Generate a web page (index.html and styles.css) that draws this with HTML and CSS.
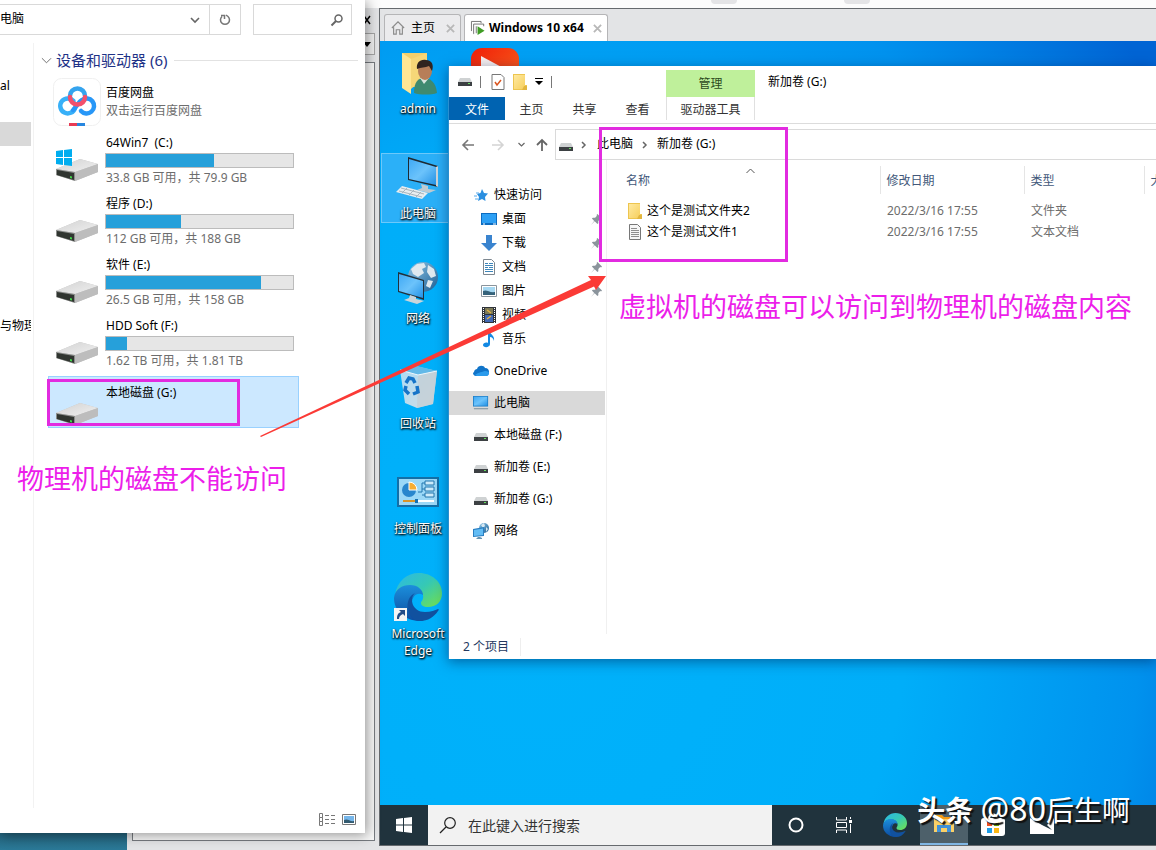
FILE: index.html
```html
<!DOCTYPE html>
<html lang="zh-CN">
<head>
<meta charset="utf-8">
<meta name="viewport" content="width=device-width, initial-scale=1">
<title>Windows 10 x64</title>
<link rel="stylesheet" href="styles.css">
</head>
<body>
<svg class="defs" aria-hidden="true">
  <defs>
    <linearGradient id="gTop" x1="0" y1="0" x2="1" y2="1"><stop offset="0" stop-color="#d2d2d2"/><stop offset="1" stop-color="#f0f0f0"/></linearGradient>
    <linearGradient id="gScreen" x1="0" y1="0" x2="1" y2="1"><stop offset="0" stop-color="#3fa9f5"/><stop offset=".5" stop-color="#6cc3fb"/><stop offset="1" stop-color="#2492e6"/></linearGradient>
    <linearGradient id="gFolder" x1="0" y1="0" x2="1" y2="1"><stop offset="0" stop-color="#ffe9a0"/><stop offset="1" stop-color="#f6cf5d"/></linearGradient>
    <linearGradient id="gEdgeA" x1="0" y1="0" x2="1" y2="1"><stop offset="0" stop-color="#2bb8e8"/><stop offset=".5" stop-color="#36c9b4"/><stop offset="1" stop-color="#74e24a"/></linearGradient>
    <linearGradient id="gEdgeB" x1="0" y1="0" x2="0" y2="1"><stop offset="0" stop-color="#1c8fdc"/><stop offset="1" stop-color="#0c4ca0"/></linearGradient>
    <linearGradient id="gBin" x1="0" y1="0" x2="1" y2="1"><stop offset="0" stop-color="#a9dcf7"/><stop offset="1" stop-color="#d4dce2"/></linearGradient>
    <linearGradient id="gRed" x1="0" y1="0" x2="1" y2="1"><stop offset="0" stop-color="#f01f08"/><stop offset="1" stop-color="#fb6a22"/></linearGradient>
    <linearGradient id="gGlobe" x1="0" y1="0" x2="1" y2="1"><stop offset="0" stop-color="#8fc6e8"/><stop offset="1" stop-color="#1c5f94"/></linearGradient>
  </defs>
  <symbol id="drive" viewBox="0 0 42 22">
    <path d="M0 10 24 0 42 5 42 13 19 22 0 16z" fill="#c3c3c3"/>
    <path d="M0 10 24 0 42 5 19 13z" fill="url(#gTop)"/>
    <path d="M19 13 42 5v8l-23 9z" fill="#bdbdbd"/>
    <path d="M0 10l19 3v9L0 16z" fill="#8b8d8b"/>
    <path d="M1 11l17 3v7L1 16z" fill="#303530"/>
    <path d="M14 17l2 .5v2l-2-.5z" fill="#44d64c"/>
  </symbol>
  <symbol id="drive-sm" viewBox="0 0 14 8">
    <path d="M2 0h10l2 4H0z" fill="#cfd2d3"/><path d="M0 4h14v4H0z" fill="#3c4043"/><path d="M10 5h2v1h-2z" fill="#63df5f"/>
  </symbol>
  <symbol id="chev-down" viewBox="0 0 12 12"><path d="M2 4l4 4 4-4" fill="none" stroke="currentColor" stroke-width="1.6"/></symbol>
  <symbol id="chev-right" viewBox="0 0 12 12"><path d="M4 3l3 3-3 3" fill="none" stroke="currentColor" stroke-width="1.500"/></symbol>
  <symbol id="pin" viewBox="0 0 12 12"><path d="M7 0l5 5-1 1-1-.5-2 2V10L7 11 4 8 0 12 3.500 7.500 1 5l1-1h2.500l2-2L6 1z" fill="#8b949c"/></symbol>
  <symbol id="folder" viewBox="0 0 14 16"><path d="M0 0h12v11h2v5H0z" fill="#edc54f"/><path d="M1 1h11v14H1z" fill="url(#gFolder)"/><path d="M11 12h3v4h-5z" fill="#e2b53e"/></symbol>
  <symbol id="edge" viewBox="0 0 48 48">
    <path d="M1 22C3 8 13 0 25 0c13 0 23 9 23 20 0 9-6 14-14 14-5 0-7-2-7-4s3-3 2-8c-1-5-6-9-13-9C9 13 4 17 1 22z" fill="url(#gEdgeA)"/>
    <path d="M0 25C1 16 8 12 16 12c8 0 13 5 13 10-6-4-12 2-11 10 1 7 5 13 12 16C12 49 0 39 0 25z" fill="url(#gEdgeB)"/>
    <path d="M21 20c-6 5-3 19 10 19 6 0 10-2 13-3 1 0 1 1 0 2-4 6-10 10-18 10C12 48 9 25 21 20z" fill="#11519f"/>
  </symbol>
  <symbol id="monitor-sm" viewBox="0 0 18 16"><path d="M0 0h17v12H0z" fill="#2381c8"/><path d="M1 1h15v10H1z" fill="url(#gScreen)"/><path d="M1 14h16v1H1z" fill="#6d8494"/></symbol>
</svg>

<div class="host-desktop">
  <section class="vmware" aria-label="VMware">
    <div class="toolbar-strip"><i></i><i></i></div>
    <div class="library">
      <button class="library-close" aria-label="关闭库"><svg viewBox="0 0 8 8"><path d="M1 0l6 8M7 0L1 8" stroke="#000" stroke-width="1.500"/></svg></button>
      <button class="library-combo" aria-label="搜索选项"><svg viewBox="0 0 8 5"><path d="M0 0h8L4 5z"/></svg></button>
      <div class="library-tree"></div>
    </div>
    <div class="vm-pane">
      <div class="vm-tabs">
        <button class="vm-tab"><svg class="i16" viewBox="0 0 16 16"><path d="M1 8l7-7 7 7M3 7v8h3v-5h4v5h3V7" fill="none" stroke="#8b8b8b" stroke-width="1.300"/></svg><span>主页</span><svg class="x" viewBox="0 0 10 10"><path d="M1 1l8 8M9 1L1 9" stroke="#b8b8b8" stroke-width="2"/></svg></button>
        <button class="vm-tab active"><svg class="i16" viewBox="0 0 16 16"><path d="M.5 11.500V.5h11v2M3.500 14.500H3v-11h11.500V6M6 14V6" fill="none" stroke="#666"/><path d="M7.500 6l8 5-8 5z" fill="#3f9c24"/></svg><span>Windows 10 x64</span><svg class="x" viewBox="0 0 10 10"><path d="M1 1l8 8M9 1L1 9" stroke="#b8b8b8" stroke-width="2"/></svg></button>
      </div>

      <div class="guest-screen">
        <div class="desktop-icons">
          <div class="icon-col">
            <a class="desk-icon" href="#admin"><svg viewBox="0 0 48 52"><path d="M8 5h25v34H14z" fill="#f3cf6c"/><path d="M8 5l9 6v35l-9-6z" fill="#ffe694"/><path d="M17 11l16-6v22l-16 14z" fill="#f6d778"/><path d="M20 45c0-11 4-15 10-15s12 4 13 15c-6 2-17 2-23 0z" fill="#3f8a70"/><path d="M26 30l4 6 5-6z" fill="#d9e5df"/><ellipse cx="31" cy="23" rx="7" ry="9" fill="#b77e58"/><path d="M23 21c-1-6 3-10 9-9 6 0 8 5 6 11l-3-5c-4 2-8 1-12 3z" fill="#30241f"/></svg><span>admin</span></a>
            <a class="desk-icon selected" href="#pc"><svg viewBox="0 0 48 52"><path d="M14 4l30 9v21l-30-7z" fill="#1e2a33"/><path d="M15 6l27 8v18l-27-6z" fill="url(#gScreen)"/><path d="M42 14l2-1v21l-2-1z" fill="#cfd6da"/><path d="M27 31l7 2v3l8 1-7 3-12-3 5-2z" fill="#bfcbd2"/><path d="M8 33l26 7-6 6-26-7z" fill="#e7edf0"/><path d="M7 35l23 6M5 38l23 6M13 35l-5 5M20 37l-5 5M27 39l-5 5" stroke="#a8b6be"/></svg><span>此电脑</span></a>
            <a class="desk-icon" href="#net"><svg viewBox="0 0 48 52"><circle cx="29" cy="19" r="15" fill="url(#gGlobe)"/><path d="M17 11l6-5 7-1 2 4-4 2 2 4-6 4-5-3zM34 7l6 4 2 7-5 2-4-6zM34 22l5 1-3 7-4-2z" fill="#dfe9ef"/><path d="M4 14l26 8v20L4 34z" fill="#22303a"/><path d="M5 16l24 7v17L5 33z" fill="url(#gScreen)"/><path d="M16 37l6 2v2l8 2-7 3-13-4 5-2z" fill="#cbd5da"/></svg><span>网络</span></a>
            <a class="desk-icon" href="#bin"><svg viewBox="0 0 48 52"><path d="M6 7l15-4 22 5-4 33-16 4-12-5z" fill="url(#gBin)"/><path d="M6 7l18 5 19-4-20-5z" fill="#62b9e8"/><path d="M24 12l19-4-4 33-16 4z" fill="#c4cfd6" opacity=".8"/><path d="M6 7l18 5 19-4" fill="none" stroke="#edf7fc"/><path d="M12 20l3-5 4 1 2 4M23 23l1 6-5 2M15 31l-4-4 1-4" fill="none" stroke="#1674c8" stroke-width="3.500"/></svg><span>回收站</span></a>
            <a class="desk-icon" href="#panel"><svg viewBox="0 0 48 52"><path d="M3 9h42v30H3z" fill="#146fa6"/><path d="M5 11h38v26H5z" fill="#9bd8f7"/><circle cx="15" cy="22" r="7" fill="#2886cd"/><path d="M15 22v-8a8 8 0 0 1 8 8z" fill="#f7ae33" stroke="#fff"/><path d="M24 24h4V15h3M28 21h3M28 27h3" fill="none" stroke="#2277ae"/><path d="M31 13h9v4h-9zM31 19h9v4h-9zM31 25h9v4h-9z" fill="#cdebfa" stroke="#2277ae"/><path d="M9 33h12" stroke="#d9952a" stroke-width="2"/><path d="M22 33h18" stroke="#fff" stroke-width="2"/><path d="M21 31h3v4h-3z" fill="#1671b2"/></svg><span>控制面板</span></a>
            <a class="desk-icon" href="#edge"><svg viewBox="0 0 48 52"><use href="#edge" width="48" height="48"/><path d="M0 35h13v13H0z" fill="#f4f4f4"/><path d="M5 37h6v6l-2-2c-3 1-4 3-4 5H3c0-4 1-6 4-7z" fill="#234c87"/></svg><span>Microsoft<br>Edge</span></a>
          </div>
          <div class="icon-col">
            <a class="desk-icon" href="#video" aria-label="视频"><svg viewBox="0 0 48 52"><rect width="48" height="48" rx="11" fill="url(#gRed)"/><path d="M10 8l26 14-26 14z" fill="#f6efef"/></svg></a>
          </div>
        </div>

        <section class="guest-explorer" aria-label="新加卷 (G:)">
          <header class="ribbon">
            <div class="ribbon-main">
              <div class="quick-bar">
                <svg class="q-drive" viewBox="0 0 14 8"><use href="#drive-sm"/></svg><i></i>
                <button class="q-props" aria-label="属性"><svg viewBox="0 0 14 16"><path d="M1 .5h9l3 3v12H1z" fill="#fff" stroke="#777"/><path d="M4 8l2 3 4-5" fill="none" stroke="#d9541e" stroke-width="1.500"/></svg></button>
                <button aria-label="新建文件夹"><svg viewBox="0 0 14 16"><use href="#folder"/></svg></button>
                <button class="q-more" aria-label="自定义快速访问工具栏"><svg viewBox="0 0 8 7"><path d="M0 0h8v1H0zM0 3h8L4 7z"/></svg></button><i></i>
              </div>
              <nav class="ribbon-tabs"><button class="file">文件</button><button>主页</button><button>共享</button><button>查看</button></nav>
            </div>
            <div class="ribbon-tool"><div>管理</div><button>驱动器工具</button></div>
            <h1>新加卷 (G:)</h1>
          </header>
          <div class="address-row">
            <button aria-label="后退"><svg viewBox="0 0 14 14"><path d="M13 7H2M7 2L2 7l5 5" fill="none" stroke="#777" stroke-width="1.600"/></svg></button>
            <button aria-label="前进"><svg viewBox="0 0 14 14"><path d="M1 7h11M7 2l5 5-5 5" fill="none" stroke="#d4d4d4" stroke-width="1.600"/></svg></button>
            <button class="recent" aria-label="最近位置"><svg viewBox="0 0 12 12"><use href="#chev-down"/></svg></button>
            <button class="up" aria-label="上移"><svg viewBox="0 0 14 14"><path d="M7 13V2M2 7l5-5 5 5" fill="none" stroke="#666" stroke-width="1.800"/></svg></button>
            <div class="address"><svg class="a-drive" viewBox="0 0 14 8"><use href="#drive-sm"/></svg><svg class="a-chev" viewBox="0 0 12 12"><use href="#chev-right"/></svg><a href="#pc">此电脑</a><svg class="a-chev" viewBox="0 0 12 12"><use href="#chev-right"/></svg><a href="#g">新加卷 (G:)</a></div>
          </div>
          <div class="explorer-body">
            <nav class="tree">
              <a class="first" href="#q"><svg viewBox="0 0 16 16"><path d="M9 2l2 4 4 .5-3 3.500.5 4-3.500-2-4 2 1-4-2-3 3.500-1z" fill="#2b8fe0"/><path d="M1 9h3M2 12h3M3 6h3" stroke="#58aaea"/></svg>快速访问</a>
              <a class="child" href="#desk"><svg viewBox="0 0 16 16"><path d="M0 2h16v12H0z" fill="#0d6cc0"/><path d="M1 3h14v9H1z" fill="#2da0f5"/><path d="M2 13h2M12 13h3" stroke="#fff"/></svg>桌面<svg class="pin" viewBox="0 0 12 12"><use href="#pin"/></svg></a>
              <a class="child" href="#down"><svg viewBox="0 0 16 16"><path d="M5 0h6v8h5l-8 8-8-8h5z" fill="#3a84cf"/></svg>下载<svg class="pin" viewBox="0 0 12 12"><use href="#pin"/></svg></a>
              <a class="child" href="#docs"><svg viewBox="0 0 16 16"><path d="M2.500.5h8l3 3v12h-11z" fill="#fff" stroke="#7d8790"/><path d="M4 4.500h3M8 4.500h4M4 6.500h8M4 8.500h3M8 8.500h4M4 10.500h8M4 12.500h8" stroke="#3e86ba"/></svg>文档<svg class="pin" viewBox="0 0 12 12"><use href="#pin"/></svg></a>
              <a class="child" href="#pics"><svg viewBox="0 0 16 16"><path d="M.5 2.500h15v11H.5z" fill="#fff" stroke="#8a949c"/><path d="M2 4h12v8H2z" fill="#a6d8f2"/><path d="M2 8c4-2 6 2 12 1v3H2z" fill="#36637b"/></svg>图片<svg class="pin" viewBox="0 0 12 12"><use href="#pin"/></svg></a>
              <a class="child" href="#videos"><svg viewBox="0 0 16 16"><path d="M1 0h14v16H1z" fill="#30343a"/><path d="M4 1h8v6H4z" fill="#7d7a57"/><path d="M4 8h8v7H4z" fill="#4369b4"/><path d="M6 3l4 3M6 12l4-3" stroke="#e4b23f" stroke-width="1.500"/><path d="M2.500 1v15M13.500 1v15" stroke="#fff" stroke-dasharray="1 1"/></svg>视频</a>
              <a class="child" href="#music"><svg viewBox="0 0 16 16"><path d="M7 0h2c0 4 5 4 4 10-1-3-2-4-4-4v7c0 4-7 4-7 1 0-2 3-3 5-2z" fill="#1389e3"/></svg>音乐</a>
              <a class="root" href="#od"><svg viewBox="0 0 16 16"><path d="M1 9c0-2 2-3 3-3 1-4 7-4 8-1 3 0 4 2 4 4s-1 4-3 4H3c-2 0-3-2-3-3z" fill="#1074c9"/><path d="M2 12c4-3 7-3 10-4 3 0 4 1 4 2 0 2-1 3-3 3H4z" fill="#2a9bec"/></svg>OneDrive</a>
              <a class="root current" href="#pc"><svg viewBox="0 0 18 16"><use href="#monitor-sm"/></svg>此电脑</a>
              <a class="root" href="#f"><svg viewBox="-1 -6 16 16"><use href="#drive-sm" width="14" height="8"/></svg>本地磁盘 (F:)</a>
              <a class="root" href="#e"><svg viewBox="-1 -6 16 16"><use href="#drive-sm" width="14" height="8"/></svg>新加卷 (E:)</a>
              <a class="root" href="#g"><svg viewBox="-1 -6 16 16"><use href="#drive-sm" width="14" height="8"/></svg>新加卷 (G:)</a>
              <a class="root" href="#net"><svg viewBox="0 0 16 16"><circle cx="11" cy="5" r="5" fill="url(#gGlobe)"/><path d="M8 2l3-2 1 3-2 2zM13 4l2 2-2 3z" fill="#d7e8f2"/><path d="M0 6l11-2v9L0 14z" fill="#2a7fc2"/><path d="M1 7l9-1.500V12l-9 1z" fill="#63bdf5"/><path d="M3 16h6v-1l-2-1H5z" fill="#6593b2"/></svg>网络</a>
            </nav>
            <div class="files">
              <table>
                <colgroup><col class="c-name"><col class="c-date"><col class="c-type"><col></colgroup>
                <thead><tr><th scope="col"><div class="name-head">名称<svg viewBox="0 0 9 6"><path d="M.5 5l4-4 4 4" fill="none" stroke="#555"/></svg></div></th><th scope="col">修改日期</th><th scope="col">类型</th><th scope="col">大小</th></tr></thead>
                <tbody>
                  <tr><td><a href="#d2"><svg viewBox="0 0 14 16"><use href="#folder"/></svg>这个是测试文件夹2</a></td><td>2022/3/16 17:55</td><td>文件夹</td><td></td></tr>
                  <tr><td><a href="#t1"><svg viewBox="0 0 14 16"><path d="M1.500.5h8l3 3v12h-11z" fill="#f6f6f6" stroke="#777"/><path d="M3 4.500h6M3 6.500h8M3 8.500h8M3 10.500h8M3 12.500h8" stroke="#8e8e8e"/></svg>这个是测试文件1</a></td><td>2022/3/16 17:55</td><td>文本文档</td><td></td></tr>
                </tbody>
              </table>
            </div>
          </div>
          <footer class="guest-status"><span>2 个项目</span></footer>
        </section>
      </div>

      <div class="taskbar">
        <button class="start" aria-label="开始"><svg viewBox="0 0 16 16"><path d="M0 2l7-1v6.500H0zM8 1l8-1v7.500H8zM0 8.500h7V15l-7-1zM8 8.500h8V16l-8-1z" fill="#fff"/></svg></button>
        <label class="task-search"><svg viewBox="0 0 16 16"><circle cx="10" cy="6" r="5.300" fill="none" stroke="#222" stroke-width="1.200"/><path d="M6 10l-6 6" stroke="#222" stroke-width="1.300"/></svg><input type="text" placeholder="在此键入进行搜索" aria-label="在此键入进行搜索"></label>
        <button aria-label="Cortana"><svg class="s16" viewBox="0 0 16 16"><circle cx="8" cy="8" r="6.500" fill="none" stroke="#fff" stroke-width="2"/></svg></button>
        <button aria-label="任务视图"><svg class="s16" viewBox="0 0 16 16"><path d="M.5 0v3h10V0M.5 16v-3h10v3M.5 5.500h10v5H.5zM14.500 0v2M14.500 7v9" fill="none" stroke="#fff"/><path d="M13 3h3v3h-3z" fill="#fff"/></svg></button>
        <nav class="apps">
          <button aria-label="Microsoft Edge"><svg class="s24" viewBox="0 0 48 48"><use href="#edge"/></svg></button>
          <button class="running" aria-label="文件资源管理器"><svg class="s24" viewBox="0 0 24 24"><path d="M2 3h8l2 2h10v4H2z" fill="#f39a14"/><path d="M2 7h20v13H2z" fill="#fad067"/><path d="M5 20v-7h14v7h-4v-4H9v4z" fill="#3f91d9"/></svg></button>
          <button aria-label="Microsoft Store"><svg class="s24" viewBox="0 0 24 24"><path d="M8 6c0-6 8-6 8 0" fill="none" stroke="#fff" stroke-width="2"/><rect y="5" width="24" height="18" rx="3" fill="#fff"/><path d="M6 8h5v5H6z" fill="#ef5022"/><path d="M13 8h5v5h-5z" fill="#7fba00"/><path d="M6 15h5v5H6z" fill="#1d9ee8"/><path d="M13 15h5v5h-5z" fill="#fdb813"/></svg></button>
          <button aria-label="邮件"><svg class="s24" viewBox="0 0 24 24"><path d="M0 5h24v16H0z" fill="#fff"/><path d="M0 5h24l-7 7 5 5-10-5z" fill="#20333d"/></svg></button>
        </nav>
      </div>
    </div>
  </section>

  <section class="host-explorer" aria-label="此电脑">
    <div class="host-top">
      <div class="host-address"><span>电脑</span><button aria-label="历史"><svg viewBox="0 0 12 12"><use href="#chev-down"/></svg></button><button class="refresh" aria-label="刷新"><svg viewBox="0 0 12 12"><path d="M3 2.500A4.500 4.500 0 1 0 9 2.500L7 1M2 1.500h3.500V5" fill="none" stroke="#777" stroke-width="1.500"/></svg></button></div>
      <label class="host-search"><input type="text" aria-label="搜索"><svg viewBox="0 0 12 12"><circle cx="7.500" cy="4.500" r="3.500" fill="none" stroke="#666" stroke-width="1.500"/><path d="M5 7l-4.500 4.500" stroke="#666" stroke-width="2"/></svg></label>
    </div>
    <div class="host-body">
      <nav class="host-nav"><a href="#al">al</a><a class="current" href="#cur" aria-label="此电脑"></a><a class="far" href="#wl">与物理</a></nav>
      <div class="host-main">
        <h2><svg viewBox="0 0 12 12"><path d="M1 3.500l5 5 5-5" fill="none" stroke="#666"/></svg>设备和驱动器 (6)</h2>
        <div class="drives">
          <a class="drive baidu" href="#baidu"><svg class="d-icon" viewBox="0 0 48 48"><rect x=".5" y=".5" width="47" height="47" rx="8" fill="#fff" stroke="#f0f0f0"/><g fill="none" stroke-width="4.500" stroke-linecap="round"><path d="M22 30a7.500 7.500 0 1 1-1.500-7" stroke="#38b0f8"/><path d="M20 32c3-2 5-8 9-10a7.500 7.500 0 1 1-1 11" stroke="#2897f7"/><path d="M17 18a7.500 7.500 0 0 1 15 0" stroke="#35a4ee"/><path d="M17 19a7.500 7.500 0 0 0 15 0" stroke="#f3506c"/></g><path d="M16 45h8v3h-8z" fill="#e83b54"/><path d="M24 45h8v3h-8z" fill="#2786df"/></svg><div class="d-info"><strong>百度网盘</strong><small>双击运行百度网盘</small></div></a>
          <a class="drive" href="#c"><svg class="d-icon" viewBox="0 0 48 48"><use href="#drive" x="3" y="25" width="42" height="22"/><path d="M3 17l7-1v7H3zM11 16l8-1v8h-8zM3 24h7v7l-7-1zM11 24h8v8l-8-1z" fill="#00adef"/></svg><div class="d-info"><strong>64Win7 &nbsp;(C:)</strong><div class="bar"><i style="width:58%"></i></div><small>33.8 GB 可用，共 79.9 GB</small></div></a>
          <a class="drive" href="#d"><svg class="d-icon" viewBox="0 0 48 48"><use href="#drive" x="3" y="25" width="42" height="22"/></svg><div class="d-info"><strong>程序 (D:)</strong><div class="bar"><i style="width:40%"></i></div><small>112 GB 可用，共 188 GB</small></div></a>
          <a class="drive" href="#e"><svg class="d-icon" viewBox="0 0 48 48"><use href="#drive" x="3" y="25" width="42" height="22"/></svg><div class="d-info"><strong>软件 (E:)</strong><div class="bar"><i style="width:83%"></i></div><small>26.5 GB 可用，共 158 GB</small></div></a>
          <a class="drive" href="#f"><svg class="d-icon" viewBox="0 0 48 48"><use href="#drive" x="3" y="25" width="42" height="22"/></svg><div class="d-info"><strong>HDD Soft (F:)</strong><div class="bar"><i style="width:11%"></i></div><small>1.62 TB 可用，共 1.81 TB</small></div></a>
          <a class="drive selected" href="#g"><svg class="d-icon" viewBox="0 0 48 48"><use href="#drive" x="3" y="25" width="42" height="22"/></svg><div class="d-info"><strong>本地磁盘 (G:)</strong></div></a>
        </div>
      </div>
    </div>
    <footer class="host-status">
      <button aria-label="详细信息"><svg viewBox="0 0 17 14"><path d="M1.500.5h3v4h-3zM1.500 4.500h3v4h-3zM1.500 8.500h3v4h-3zM7 2.500h4M13 2.500h4M7 6.500h4M13 6.500h4M7 10.500h4M13 10.500h4" fill="none" stroke="#777"/></svg></button>
      <button aria-label="大图标"><svg viewBox="0 0 17 14"><path d="M1.500 1.500h13v10h-13z" fill="#fff" stroke="#777"/><path d="M3 3h10v7H3z" fill="#75b6ea"/><path d="M3 7c4-2 6 2 10 1v2H3z" fill="#335b70"/></svg></button>
    </footer>
  </section>

  <div class="notes">
    <svg class="arrow" viewBox="0 0 346 161" aria-hidden="true"><path d="M0 160L331 4 328 0 346 0 336 14 334 10.500 120 107 1 161z" fill="#fb3a36"/></svg>
    <div class="mark mark-disk"></div>
    <div class="mark mark-files"></div>
    <p class="note note-host">物理机的磁盘不能访问</p>
    <p class="note note-guest">虚拟机的磁盘可以访问到物理机的磁盘内容</p>
    <p class="watermark"><b>头条</b> <span>@80</span>后生啊</p>
  </div>
</div>
</body>
</html>
```
FILE: styles.css
```css
* { box-sizing: border-box; }
body {
  margin: 0;
  font: 12px/18px "Noto Sans", "Noto Sans CJK SC", sans-serif;
  color: #000;
}
button, input { font: inherit; color: inherit; background: none; border: 0; padding: 0; margin: 0; }
a { color: inherit; text-decoration: none; }
svg { display: block; flex: none; overflow: visible; }
h1, h2, p { margin: 0; font-weight: 400; }
.defs { position: absolute; width: 0; height: 0; }

.host-desktop {
  position: relative;
  min-height: 100vh;
  overflow: hidden;
  background: linear-gradient(#225d75, #2b7a98) bottom / 100% 20px no-repeat #2b7a98;
}

/* VMware main window */
.vmware {
  position: absolute;
  inset: 0 0 0 127px;
  display: grid;
  grid-template: 8px 1fr / 252px 1fr;
  background: #e3e4e6;
}
.toolbar-strip {
  grid-column: 1 / -1;
  display: flex;
  gap: 107px;
  padding-left: 584px;
  background: #fcfcfc;
}
.toolbar-strip i { width: 26px; height: 4px; border-radius: 0 0 4px 4px; background: #e4e4e6; }
.library { display: flex; flex-direction: column; padding: 4px 4px 9px 5px; }
.library-close { align-self: flex-end; width: 8px; height: 16px; margin-right: 4px; }
.library-close svg { width: 8px; height: 8px; }
.library-combo {
  display: flex;
  justify-content: flex-end;
  align-items: center;
  height: 22px;
  margin: 5px 0 7px;
  padding-right: 3px;
  border: 1px solid #a5a5a5;
  background: #eee;
}
.library-combo svg { width: 8px; height: 5px; }
.library-tree { flex: 1; border: 1px solid #777b80; background: #f8f8f8; }
.vm-pane {
  display: flex;
  flex-direction: column;
  min-width: 0;
  margin-bottom: 4px;
  border: solid #666a6e;
  border-width: 1px 0 1px 1px;
}
.vm-tabs { display: flex; gap: 3px; height: 32px; padding: 5px 4px 0; }
.vm-tab {
  display: flex;
  align-items: center;
  gap: 6px;
  padding: 0 5px 0 6px;
  border: 1px solid #b5b5b7;
  border-bottom: 0;
  border-radius: 3px 3px 0 0;
  background: #ebebed;
  white-space: nowrap;
}
.vm-tab.active { gap: 4px; background: #fff; font-weight: 700; }
.vm-tab .i16 { width: 14px; height: 14px; }
.vm-tab .x { width: 9px; height: 9px; margin-left: 5px; }

/* Guest desktop */
.guest-screen {
  position: relative;
  flex: 1;
  background: radial-gradient(ellipse 100% 115% at 20% 75%, #00b2fb 0, #00aef9 48%, #0092ee 78%, #0064d4 100%);
}
.desktop-icons { display: flex; gap: 3px; padding: 7px 1px; }
.icon-col { display: flex; flex-direction: column; gap: 35px; }
.desk-icon {
  display: flex;
  flex-direction: column;
  align-items: center;
  width: 74px;
  height: 70px;
  color: #fff;
  line-height: 17px;
  text-align: center;
  text-shadow: 1px 1px 2px #000, 0 1px 2px #000;
}
.desk-icon svg { width: 48px; height: 52px; }
.desk-icon.selected { background: #2bb0f8; outline: 1px solid #6cc9fa; outline-offset: -1px; }

/* Guest explorer window */
.guest-explorer {
  position: absolute;
  inset: 25px 0 146px 68px;
  display: flex;
  flex-direction: column;
  background: #fff;
  border-left: 1px solid #2a8fd0;
  box-shadow: 0 3px 12px rgba(0, 30, 80, .5);
}
.ribbon { display: flex; height: 58px; border-bottom: 1px solid #dcdcdc; }
.ribbon-main { width: 217px; }
.quick-bar { display: flex; align-items: center; gap: 8px; height: 31px; padding-left: 9px; }
.quick-bar i { width: 1px; height: 12px; background: #777; }
.quick-bar button svg { width: 14px; height: 16px; }
.quick-bar .q-drive { width: 14px; height: 8px; }
.quick-bar .q-props { margin-left: 2px; }
.quick-bar .q-more svg { width: 8px; height: 7px; }
.ribbon-tabs { display: flex; height: 23px; color: #333; }
.ribbon-tabs button { width: 53px; padding-top: 2px; }
.ribbon-tabs .file { width: 56px; background: #0063b1; color: #fff; }
.ribbon-tool { width: 89px; padding-top: 4px; text-align: center; color: #333; }
.ribbon-tool div { height: 27px; line-height: 27px; background: #bff09b; color: #2d4a20; }
.ribbon-tool button { width: 100%; height: 23px; padding-top: 2px; border: solid #e0e0e0; border-width: 0 1px; }
.ribbon h1 { padding: 7px 13px; font-size: 12px; line-height: 18px; }
.address-row { display: flex; align-items: center; height: 36px; padding-top: 5px; color: #666; }
.address-row button { width: 14px; margin-left: 12px; }
.address-row button + button { margin-left: 16px; }
.address-row .recent { width: 9px; }
.address-row .up { width: 14px; }
.address-row button.recent { margin-left: 12px; }
.address-row button.up { margin-left: 9px; }
.address {
  display: flex;
  align-items: center;
  flex: 1;
  height: 31px;
  margin-left: 6px;
  border: 1px solid #dadada;
  border-right: 0;
}
.address a { padding-bottom: 2px; color: #000; }
.a-drive { width: 14px; height: 8px; margin: 4px 5px 0 3px; }
.a-chev { width: 12px; height: 12px; margin-right: 7px; }
.address a + .a-chev { margin-left: 6px; margin-right: 6px; }
.explorer-body { display: flex; flex: 1; min-height: 0; }
.tree { flex: none; width: 158px; padding: 23px 1px 0 0; border-right: 1px solid #f0f0f0; }
.tree a { display: flex; align-items: center; gap: 5px; height: 24px; padding-left: 24px; }
.tree a > svg { width: 16px; height: 16px; }
.tree .child { padding-left: 32px; }
.tree .root { margin-top: 8px; }
.tree .current { background: #d9d9d9; }
.tree a > .pin { width: 11px; height: 11px; margin-left: auto; margin-right: 3px; }
.files { flex: 1; min-width: 0; padding-top: 6px; overflow: hidden; }
table { width: 640px; table-layout: fixed; border-collapse: collapse; }
.c-name { width: 273px; }
.c-date { width: 144px; }
.c-type { width: 120px; }
th, td { padding: 0 7px; text-align: left; font-weight: 400; color: #6d6d6d; white-space: nowrap; }
th { height: 28px; padding: 2px 6px 0; color: #42587a; border-left: 1px solid #e5e5e5; }
th:first-child { border-left: 0; padding-left: 19px; }
.name-head { display: flex; gap: 96px; }
.name-head svg { width: 9px; height: 6px; margin-top: -4px; }
tbody::before { content: ""; display: block; height: 6px; }
td { height: 21px; }
td:first-child { padding-left: 21px; }
td a { display: flex; align-items: center; gap: 5px; color: #000; }
td svg { width: 14px; height: 16px; }
.guest-status { display: flex; align-items: center; height: 25px; padding-left: 14px; color: #25395f; }
.guest-status span { padding-right: 11px; border-right: 1px solid #eee; }

/* Guest taskbar */
.taskbar { display: flex; height: 40px; background: #20333d; }
.taskbar button { display: flex; align-items: center; justify-content: center; width: 48px; }
.apps { display: flex; gap: 1px; padding-left: 3px; }
.start svg, .s16 { width: 16px; height: 16px; }
.s24 { width: 24px; height: 24px; }
.taskbar .running { background: #4d606a; border-bottom: 2px solid #7fb6e4; }
.task-search { display: flex; align-items: center; gap: 12px; width: 344px; padding-left: 12px; background: #f2f2f2; }
.task-search svg { width: 16px; height: 16px; }
.task-search input { flex: 1; min-width: 0; padding-top: 1px; font-size: 14px; outline: 0; }
.task-search input::placeholder { color: #333; opacity: 1; }

/* Host explorer window */
.host-explorer {
  position: absolute;
  inset: 0 auto 17px 0;
  width: 365px;
  display: flex;
  flex-direction: column;
  background: #fff;
  box-shadow: 2px 2px 12px rgba(0, 0, 0, .4);
}
.host-top { display: flex; gap: 12px; padding: 4px 13px 8px 0; color: #666; }
.host-address { display: flex; flex: 1; height: 31px; border: 1px solid #d9d9d9; border-left: 0; }
.host-address span { flex: 1; color: #000; line-height: 28px; }
.host-address button { display: flex; align-items: center; justify-content: center; width: 28px; }
.host-address .refresh { width: 31px; border-left: 1px solid #d9d9d9; }
.host-address svg, .host-search svg { width: 12px; height: 12px; }
.host-search { display: flex; align-items: center; width: 99px; height: 31px; padding-right: 8px; border: 1px solid #d9d9d9; }
.host-search input { flex: 1; min-width: 0; outline: 0; }
.host-body { display: flex; flex: 1; }
.host-nav { width: 34px; padding: 31px 2px 0 0; border-right: 1px solid #f2f2f2; }
.host-nav a { display: block; height: 24px; line-height: 24px; overflow: hidden; white-space: nowrap; }
.host-nav .current { margin: 24px 0 168px; background: #d9d9d9; }
.host-main { flex: 1; padding: 7px 7px 0; }
.host-main h2 { display: flex; align-items: center; gap: 4px; color: #1e3287; font-size: 15px; line-height: 20px; }
.host-main h2::after { content: ""; flex: 1; height: 1px; margin-left: 3px; background: #e2e2e2; }
.host-main h2 svg { width: 11px; height: 11px; }
.drives { display: flex; flex-direction: column; gap: 5px; padding: 8px 59px 0 7px; }
.drive { display: flex; gap: 4px; height: 56px; padding: 2px 5px 0; }
.drive.baidu { height: 49px; padding-top: 0; }
.drive.baidu .d-info { padding-top: 6px; }
.d-icon { width: 48px; height: 48px; }
.d-info { flex: 1; }
.d-info strong, .d-info small { display: block; padding-left: 1px; font-size: 12px; font-weight: 400; line-height: 18px; white-space: nowrap; }
.d-info small { color: #6d6d6d; }
.bar { height: 15px; margin: 1px 0; border: 1px solid #bcbcbc; background: #e6e6e6; }
.bar i { display: block; height: 100%; background: #26a0da; }
.drive.selected { height: 52px; background: #cce8ff; outline: 1px solid #99d1ff; outline-offset: -1px; }
.drive.selected .d-info { padding-top: 6px; }
.host-status { display: flex; align-items: center; justify-content: flex-end; gap: 6px; height: 25px; padding: 0 7px 2px 0; }
.host-status svg { width: 17px; height: 14px; }

/* Annotations over both windows */
.notes { position: absolute; inset: 0; pointer-events: none; }
.notes > * { position: absolute; }
.arrow { left: 260px; top: 276px; width: 346px; height: 161px; }
.mark { border: 3px solid #e22be0; }
.mark-disk { left: 47px; top: 379px; width: 193px; height: 47px; }
.mark-files { left: 599px; top: 127px; width: 189px; height: 135px; }
.note { color: #ec1eea; font-size: 27px; line-height: 36px; white-space: nowrap; }
.note-host { left: 17px; top: 461px; }
.note-guest { left: 619px; top: 289px; }
.watermark {
  right: 26px;
  bottom: 20px;
  color: #fff;
  font-size: 28px;
  line-height: 40px;
  white-space: nowrap;
  text-shadow: 2px 2px 1px #111;
}
.watermark span { font-size: 32px; }
```
